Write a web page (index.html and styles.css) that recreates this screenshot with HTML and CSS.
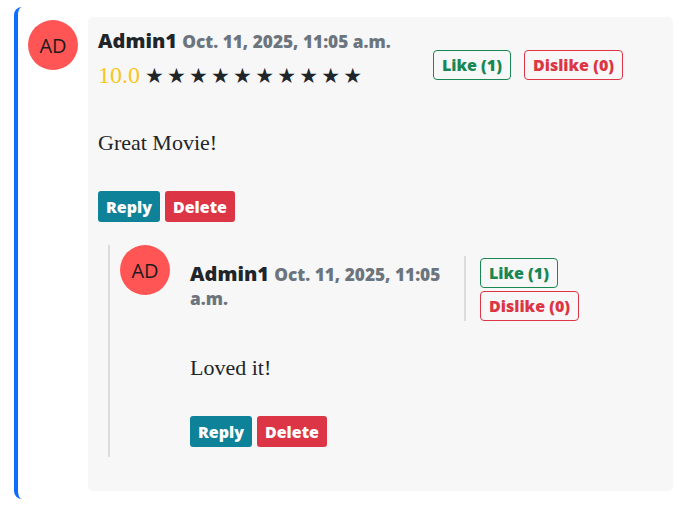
FILE: index.html
```html
<!DOCTYPE html>
<html lang="en">
<head>
<meta charset="utf-8">
<title>Comments</title>
<link rel="stylesheet" href="styles.css">
</head>
<body>
<div class="thread">
  <div class="avatar">AD</div>
  <div class="card">
    <div class="head">
      <div class="head-main">
        <div class="name">Admin1 <span class="date">Oct. 11, 2025, 11:05 a.m.</span></div>
        <div class="rating"><span class="score">10.0</span><span class="stars">★★★★★★★★★★</span></div>
      </div>
      <div class="votes">
        <button class="vote like">Like (1)</button>
        <button class="vote dislike">Dislike (0)</button>
      </div>
    </div>
    <p class="text">Great Movie!</p>
    <div class="actions">
      <button class="act reply">Reply</button>
      <button class="act delete">Delete</button>
    </div>

    <div class="reply-box">
      <div class="avatar avatar-sm">AD</div>
      <div class="reply-content">
        <div class="head head-reply">
          <div class="head-main head-main-reply">
            <div class="name">Admin1 <span class="date">Oct. 11, 2025, 11:05 a.m.</span></div>
          </div>
          <div class="votes votes-col">
            <button class="vote like">Like (1)</button>
            <button class="vote dislike">Dislike (0)</button>
          </div>
        </div>
        <p class="text text-reply">Loved it!</p>
        <div class="actions">
          <button class="act reply">Reply</button>
          <button class="act delete">Delete</button>
        </div>
      </div>
    </div>
  </div>
</div>
</body>
</html>
```

FILE: styles.css
```css
html, body {
  margin: 0;
  padding: 0;
  background: #ffffff;
}

body {
  font-family: "Open Sans", "Noto Sans", sans-serif;
  color: #212529;
}

.thread {
  display: flex;
  gap: 10px;
  margin: 7px 21px 15px 14px;
  padding: 10px 0 8px 10px;
  border-left: 4px solid #0d6efd;
  border-radius: 8px;
}

.avatar {
  flex: none;
  width: 50px;
  height: 50px;
  margin-top: 3px;
  border-radius: 50%;
  background: #ff5555;
  color: #1c1c1c;
  font-family: "Open Sans", "Noto Sans", sans-serif;
  font-size: 20px;
  font-weight: 400;
  display: flex;
  align-items: center;
  justify-content: center;
}

.avatar-sm {
  margin-top: 0;
}

.card {
  flex: 1;
  min-width: 0;
  background: #f7f7f7;
  border-radius: 5px;
  padding: 12px 10px 10px 10px;
}

.head {
  display: flex;
  align-items: flex-start;
}

.head-main {
  width: 335px;
  flex: none;
}

.name {
  font-size: 20px;
  font-weight: 800;
  line-height: 24px;
  color: #212529;
}

.date {
  font-size: 17.25px;
  line-height: 1;
  color: #6c757d;
  font-weight: 800;
}

.rating {
  margin-top: 6px;
  line-height: 32px;
  height: 32px;
  display: flex;
  align-items: baseline;
}

.score {
  font-family: "Liberation Serif", serif;
  font-size: 24px;
  color: #f7c61a;
}

.stars {
  font-family: "DejaVu Sans", sans-serif;
  font-size: 21px;
  letter-spacing: 3.2px;
  margin-left: 5px;
  color: #212529;
}

.votes {
  display: flex;
  gap: 13px;
  margin-top: 21px;
}

.vote {
  font-family: "Open Sans", "Noto Sans", sans-serif;
  font-size: 16px;
  font-weight: 800;
  line-height: 24px;
  padding: 2px 8px;
  background: transparent;
  border-radius: 4px;
  cursor: pointer;
}

.like {
  border: 1px solid #198754;
  color: #198754;
}

.dislike {
  border: 1px solid #dc3545;
  color: #dc3545;
}

.text {
  margin: 35px 0 0 0;
  font-family: "Liberation Serif", serif;
  font-size: 22px;
  line-height: 33px;
  color: #212529;
}

.actions {
  display: flex;
  gap: 5px;
  margin-top: 32px;
}

.act {
  font-family: "Open Sans", "Noto Sans", sans-serif;
  font-size: 16px;
  font-weight: 800;
  line-height: 24px;
  padding: 3.5px 8px;
  border: none;
  border-radius: 3px;
  color: #ffffff;
  cursor: pointer;
}

.reply {
  background: #0e8299;
}

.delete {
  background: #dc3545;
}

.reply-box {
  display: flex;
  gap: 20px;
  margin: 23px 0 24px 10px;
  padding: 0 0 10px 10px;
  border-left: 2px solid #dcdcdc;
}

.reply-content {
  flex: 1;
  padding-top: 11px;
}

.head-main-reply {
  width: 265px;
  margin-top: 6px;
}

.votes-col {
  flex-direction: column;
  align-items: flex-start;
  gap: 3px;
  margin: 0 0 0 9px;
  padding: 2px 0 0 14px;
  border-left: 2px solid #dcdcdc;
}

.text-reply {
  margin-top: 30px;
}
```
